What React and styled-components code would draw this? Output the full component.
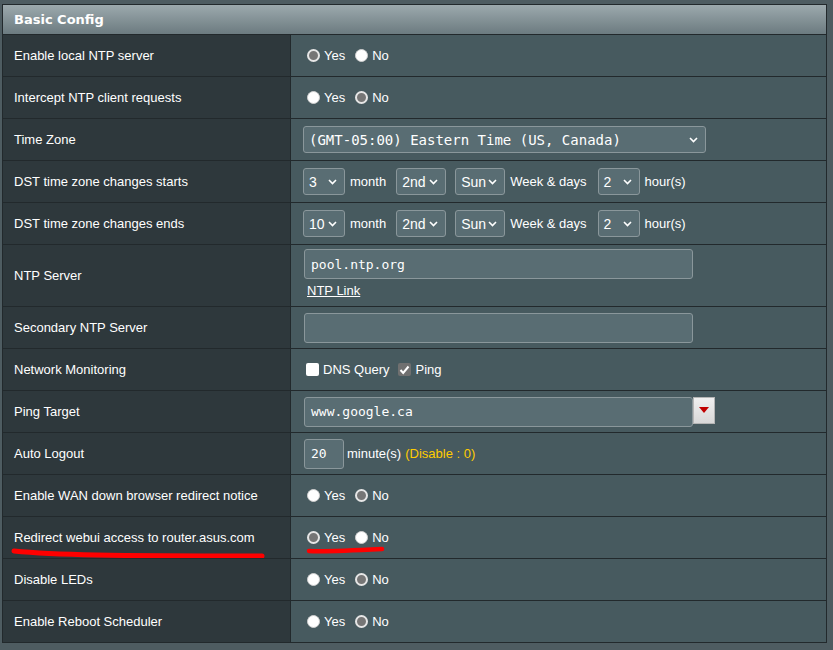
import { createGlobalStyle, styled } from 'styled-components';

const GlobalStyle = createGlobalStyle`
  html, body {
    margin: 0;
    background: #4e5c61;
  }
  body {
    font-family: "Liberation Sans", Arial, sans-serif;
    font-size: 13px;
    color: #fff;
  }
`;

const Panel = styled.div`
  margin: 4px 0 0 2px;
  width: 823px;
  border: 1px solid #22292c;
  background: #475a5f;
`;

const Header = styled.div`
  height: 29px;
  line-height: 29px;
  padding-left: 11px;
  background: linear-gradient(to bottom, #9ca9ad, #6c7b80);
  font-family: "DejaVu Sans", Verdana, sans-serif;
  font-weight: bold;
  font-size: 13px;
  color: #fff;
`;

const Row = styled.div`
  position: relative;
  display: grid;
  grid-template-columns: 288px 1fr;
  height: ${(p) => p.$h || 41}px;
  border-top: 1px solid #22292c;
`;

const Label = styled.div`
  box-sizing: border-box;
  display: flex;
  align-items: center;
  padding: 0 0 1px 11px;
  background: #2e383c;
  border-right: 1px solid #22292c;
`;

const Value = styled.div`
  display: flex;
  flex-direction: ${(p) => (p.$column ? 'column' : 'row')};
  align-items: ${(p) => (p.$column ? 'flex-start' : 'center')};
  padding: ${(p) => (p.$column ? '4px 0 0 12px' : '0 0 0 12px')};
  background: #475a5f;
`;

const RadioGroup = styled.div`
  display: flex;
  align-items: center;
  gap: 10px;
  margin-left: 4px;
`;

const RadioOption = styled.label`
  display: flex;
  align-items: center;
  gap: 4px;
`;

const RadioDot = styled.span`
  box-sizing: border-box;
  width: 13px;
  height: 13px;
  border-radius: 50%;
  background: ${(p) => (p.$checked ? '#767676' : '#fff')};
  border: ${(p) => (p.$checked ? '2px solid #e6e6e6' : '1px solid #d0d0d0')};
`;

const SelectBox = styled.div`
  box-sizing: border-box;
  position: relative;
  display: flex;
  align-items: center;
  width: ${(p) => p.$w}px;
  height: 27px;
  padding-left: 5px;
  margin-left: ${(p) => p.$ml || 0}px;
  background: #596d73;
  border: 1px solid #8a979b;
  border-radius: 3px;
  font-family: ${(p) =>
    p.$mono ? '"DejaVu Sans Mono", "Liberation Mono", monospace' : '"Liberation Sans", Arial, sans-serif'};
  font-size: 14px;
  color: #fff;
  svg {
    position: absolute;
    right: 7px;
    top: 10px;
  }
`;

const Text = styled.span`
  margin-left: ${(p) => p.$ml || 0}px;
  color: ${(p) => p.$color || '#fff'};
`;

const TextInput = styled.div`
  box-sizing: border-box;
  display: flex;
  align-items: center;
  width: ${(p) => p.$w}px;
  height: 30px;
  margin-left: 1px;
  padding-left: 6px;
  background: #596d73;
  border: 1px solid #8a979b;
  border-radius: 3px;
  font-family: "DejaVu Sans Mono", "Liberation Mono", monospace;
  font-size: 13px;
  color: #fff;
`;

const LinkText = styled.a`
  margin: 4px 0 0 4px;
  color: #fff;
  text-decoration: underline;
`;

const Check = styled.span`
  box-sizing: border-box;
  display: inline-flex;
  align-items: center;
  justify-content: center;
  width: 13px;
  height: 13px;
  margin-left: ${(p) => p.$ml || 0}px;
  border-radius: 2px;
  background: ${(p) => (p.$checked ? '#707070' : '#fff')};
`;

const Combo = styled.div`
  display: flex;
  align-items: flex-start;
`;

const DropButton = styled.div`
  box-sizing: border-box;
  display: flex;
  align-items: center;
  justify-content: center;
  width: 22px;
  height: 27px;
  background: linear-gradient(to bottom, #f0f0f0, #d8d8d8);
  border: 1px solid #b5b5b5;
`;

const Scribble = styled.svg`
  position: absolute;
  left: 0;
  top: 0;
  pointer-events: none;
  overflow: visible;
`;

function Chevron() {
  return (
    <svg width="9" height="6" viewBox="0 0 9 6">
      <polyline points="1,1 4.5,4.5 8,1" fill="none" stroke="#fff" strokeWidth="1.6" />
    </svg>
  );
}

function YesNo({ value }) {
  return (
    <RadioGroup>
      <RadioOption>
        <RadioDot $checked={value === 'yes'} />
        Yes
      </RadioOption>
      <RadioOption>
        <RadioDot $checked={value === 'no'} />
        No
      </RadioOption>
    </RadioGroup>
  );
}

function Select({ children, w, ml, mono }) {
  return (
    <SelectBox $w={w} $ml={ml} $mono={mono}>
      {children}
      <Chevron />
    </SelectBox>
  );
}

function DstRow({ month }) {
  return (
    <>
      <Select w={42}>{month}</Select>
      <Text $ml={5}>month</Text>
      <Select w={50} ml={10}>2nd</Select>
      <Select w={50} ml={9}>Sun</Select>
      <Text $ml={5}>Week &amp; days</Text>
      <Select w={42} ml={11}>2</Select>
      <Text $ml={5}>hour(s)</Text>
    </>
  );
}

export default function App() {
  return (
    <>
      <GlobalStyle />
      <Panel>
        <Header>Basic Config</Header>
        <Row>
          <Label>Enable local NTP server</Label>
          <Value>
            <YesNo value="yes" />
          </Value>
        </Row>
        <Row>
          <Label>Intercept NTP client requests</Label>
          <Value>
            <YesNo value="no" />
          </Value>
        </Row>
        <Row>
          <Label>Time Zone</Label>
          <Value>
            <Select w={403} mono>
              (GMT-05:00) Eastern Time (US, Canada)
            </Select>
          </Value>
        </Row>
        <Row>
          <Label>DST time zone changes starts</Label>
          <Value>
            <DstRow month="3" />
          </Value>
        </Row>
        <Row>
          <Label>DST time zone changes ends</Label>
          <Value>
            <DstRow month="10" />
          </Value>
        </Row>
        <Row $h={61}>
          <Label>NTP Server</Label>
          <Value $column>
            <TextInput $w={389}>pool.ntp.org</TextInput>
            <LinkText href="#">NTP Link</LinkText>
          </Value>
        </Row>
        <Row>
          <Label>Secondary NTP Server</Label>
          <Value>
            <TextInput $w={389} />
          </Value>
        </Row>
        <Row>
          <Label>Network Monitoring</Label>
          <Value>
            <Check $ml={3} />
            <Text $ml={4}>DNS Query</Text>
            <Check $ml={9} $checked>
              <svg width="11" height="10" viewBox="0 0 11 10">
                <polyline points="1.5,5 4.2,8 9.5,1.5" fill="none" stroke="#fff" strokeWidth="2" />
              </svg>
            </Check>
            <Text $ml={4}>Ping</Text>
          </Value>
        </Row>
        <Row>
          <Label>Ping Target</Label>
          <Value>
            <Combo>
              <TextInput $w={389}>www.google.ca</TextInput>
              <DropButton>
                <svg width="10" height="6" viewBox="0 0 10 6">
                  <polygon points="0,0 10,0 5,6" fill="#c00000" />
                </svg>
              </DropButton>
            </Combo>
          </Value>
        </Row>
        <Row>
          <Label>Auto Logout</Label>
          <Value>
            <TextInput $w={40}>20</TextInput>
            <Text $ml={3}>minute(s)</Text>
            <Text $ml={4} $color="#ffcc00">
              (Disable : 0)
            </Text>
          </Value>
        </Row>
        <Row>
          <Label>Enable WAN down browser redirect notice</Label>
          <Value>
            <YesNo value="no" />
          </Value>
        </Row>
        <Row>
          <Label>Redirect webui access to router.asus.com</Label>
          <Value>
            <YesNo value="yes" />
          </Value>
          <Scribble width="823" height="41">
            <path
              d="M11 34 C 50 38, 110 39, 259 39"
              fill="none"
              stroke="#ff0000"
              strokeWidth="5"
              strokeLinecap="round"
            />
            <path
              d="M306 34 C 320 35, 340 34, 379 32"
              fill="none"
              stroke="#ff0000"
              strokeWidth="4.5"
              strokeLinecap="round"
            />
          </Scribble>
        </Row>
        <Row>
          <Label>Disable LEDs</Label>
          <Value>
            <YesNo value="no" />
          </Value>
        </Row>
        <Row>
          <Label>Enable Reboot Scheduler</Label>
          <Value>
            <YesNo value="no" />
          </Value>
        </Row>
      </Panel>
    </>
  );
}
